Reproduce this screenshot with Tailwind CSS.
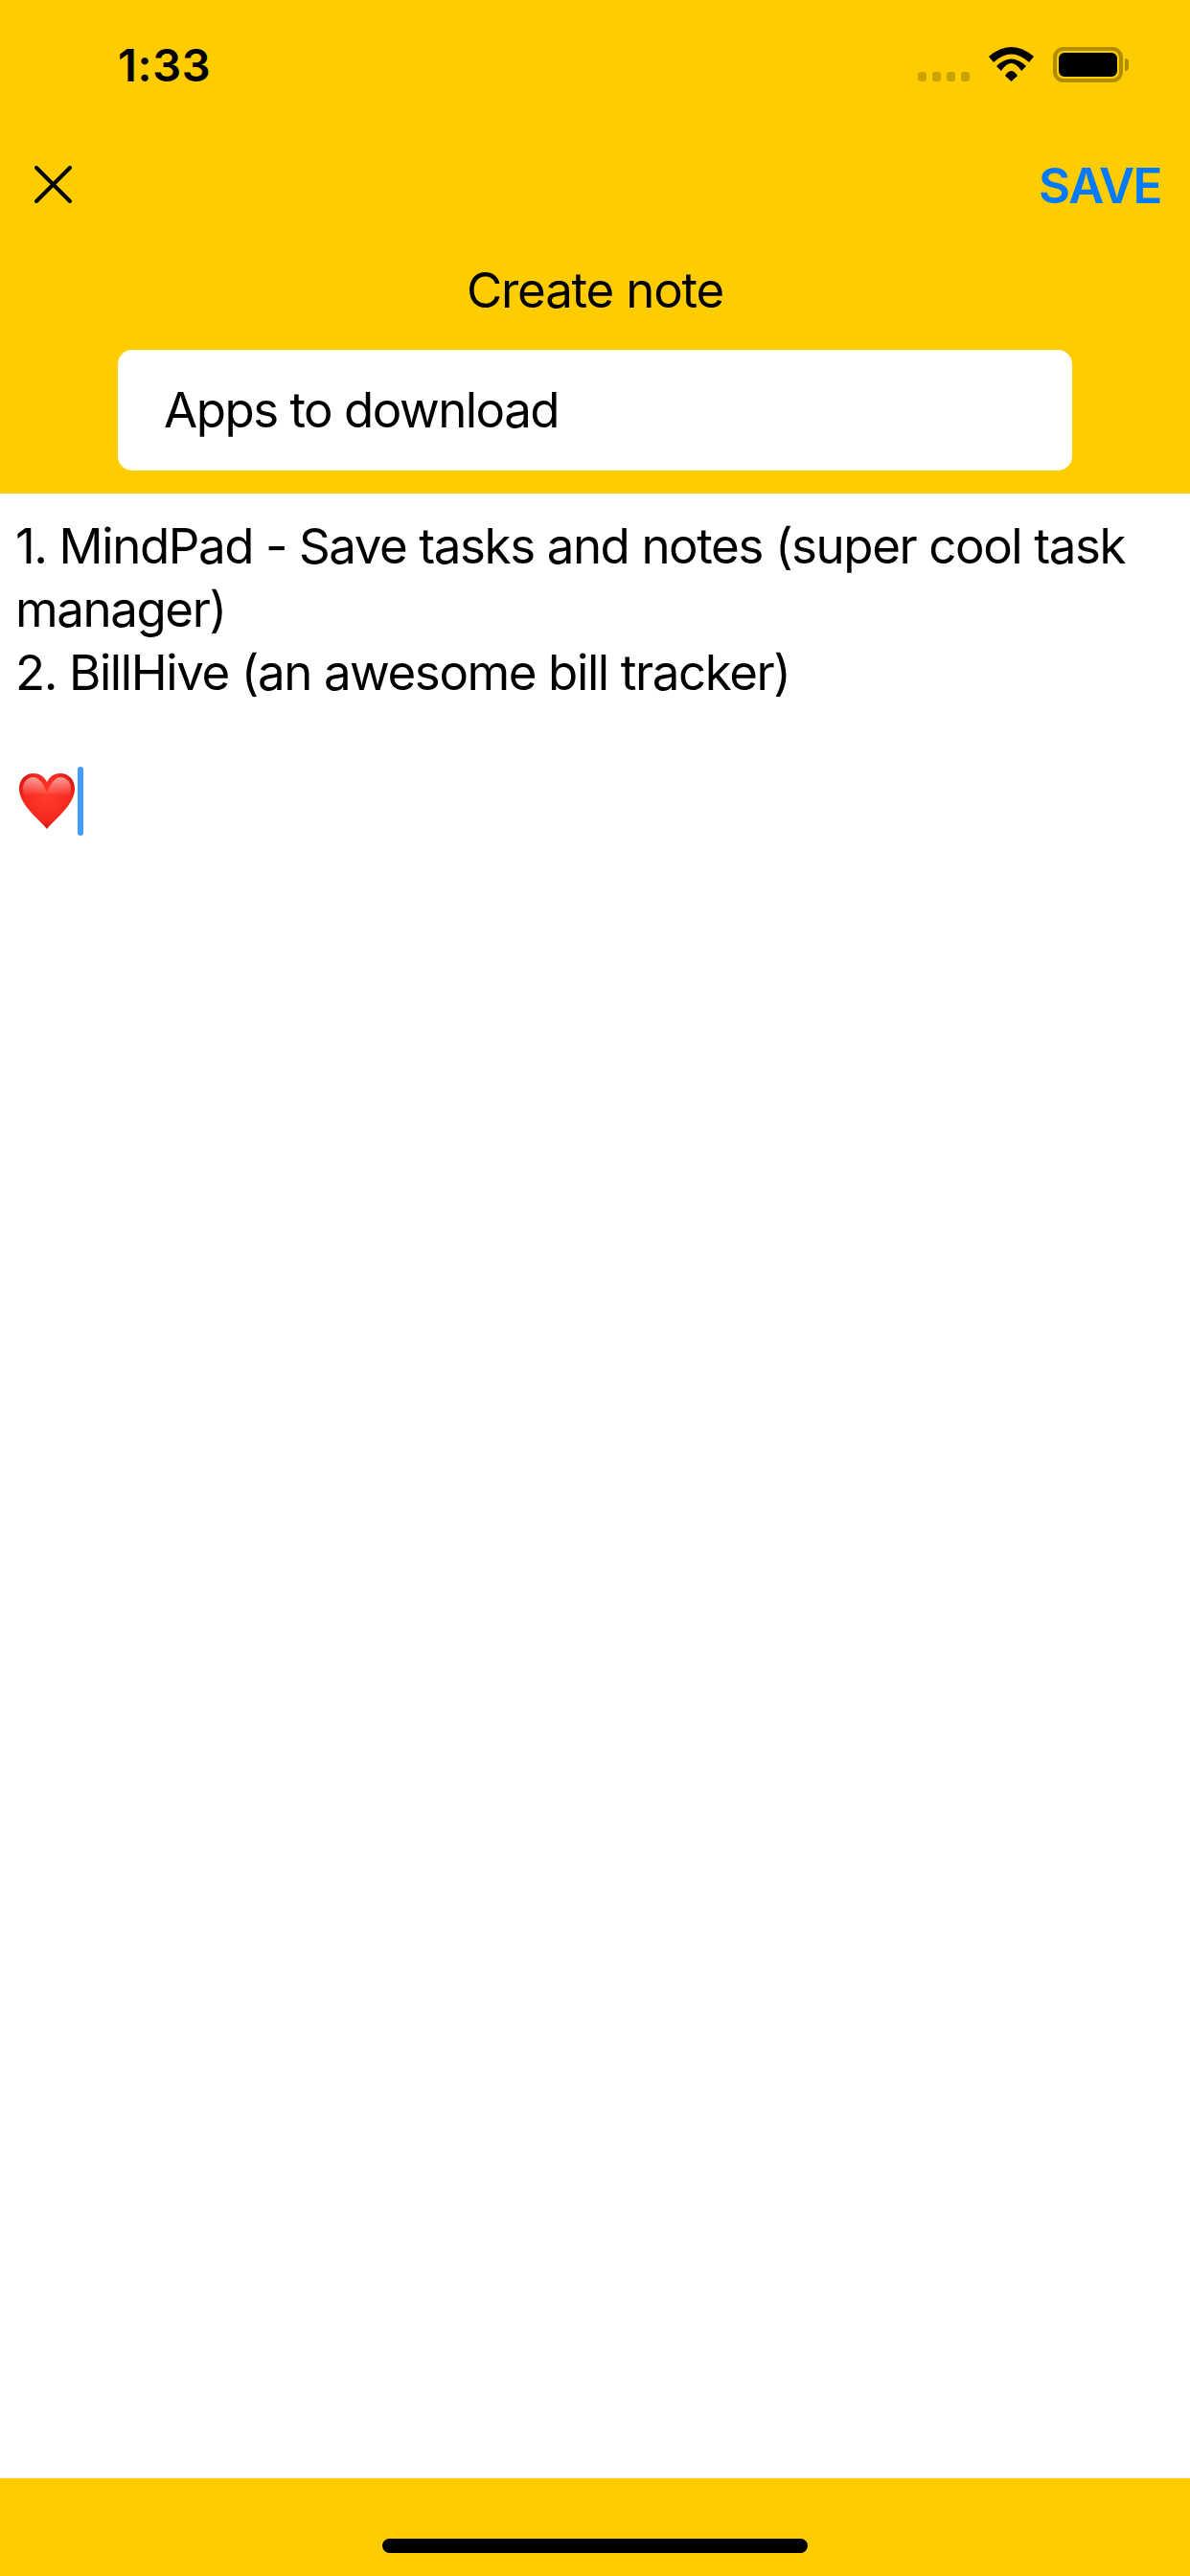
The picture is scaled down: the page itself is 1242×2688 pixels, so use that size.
<!DOCTYPE html>
<html lang="en">
<head>
<meta charset="utf-8">
<title>Create note</title>
<script src="https://cdn.jsdelivr.net/npm/@tailwindcss/browser@4"></script>
</head>
<body class="m-0 bg-white font-['Inter','Liberation_Sans',sans-serif] text-black">
<div class="flex h-[2688px] w-[1242px] flex-col overflow-hidden">
  <header class="flex h-[515px] flex-col bg-[#ffcc00]">
    <div class="flex h-[136px] items-start justify-between pl-[123px] pr-[64px] pt-[39px]">
      <span class="text-[47px] leading-[57px] font-semibold tracking-[0.7px]">1:33</span>
      <div class="flex items-start pt-[10px]">
        <div class="mt-[26px] flex gap-[6px]">
          <span class="h-[10px] w-[9px] rounded-[3px] bg-[#cca300]"></span>
          <span class="h-[10px] w-[9px] rounded-[3px] bg-[#cca300]"></span>
          <span class="h-[10px] w-[9px] rounded-[3px] bg-[#cca300]"></span>
          <span class="h-[10px] w-[9px] rounded-[3px] bg-[#cca300]"></span>
        </div>
        <svg class="ml-[20px] h-[36px] w-[47px]" viewBox="0 0 47 36" fill="#000">
          <path d="M0 10Q23.5 -10 47 10L42 16Q23.5 -1 5 16Z"/>
          <path d="M8 20Q23.5 5 39 20L34 25Q23.5 9 13 25Z"/>
          <path d="M17 30Q23.5 20 30 30L23.5 36Z"/>
        </svg>
        <div class="ml-[20px] flex items-center">
          <div class="flex h-[37px] w-[73px] items-center justify-center rounded-[11px] border-[4px] border-[#b08d00]">
            <div class="h-[25px] w-[61px] rounded-[6px] bg-black"></div>
          </div>
          <div class="ml-[2px] h-[13px] w-[4px] rounded-r-[4px] bg-[#b08d00]"></div>
        </div>
      </div>
    </div>
    <div class="flex h-[112px] items-center justify-between pl-[36px] pr-[30px]">
      <svg class="h-[39px] w-[39px]" viewBox="0 0 39 39" fill="none" stroke="#000" stroke-width="4" stroke-linecap="round">
        <path d="M2 2L37 37M37 2L2 37"/>
      </svg>
      <span class="mt-[3px] text-[51px] leading-[58px] font-semibold tracking-[-1.5px] text-[#007aff]">SAVE</span>
    </div>
    <div class="flex h-[117px] items-start justify-center pt-[26px]">
      <span class="text-[51px] leading-[58px] tracking-[-1.2px]">Create note</span>
    </div>
    <div class="mx-[123px] flex h-[126px] items-center rounded-[15px] bg-white pl-[48px] text-[51px] tracking-[-1.5px]">Apps to download</div>
  </header>
  <main class="flex-1 px-[16px] pt-[22px] text-[51px] leading-[66px] tracking-[-1.4px]">
    <div>1. MindPad - Save tasks and notes (super cool task<br>manager)<br>2. BillHive (an awesome bill tracker)</div>
    <div class="mt-[65px] flex items-center pl-[4px]">
      <svg class="h-[58px] w-[58px]" viewBox="0 0 58 58">
        <defs>
          <radialGradient id="heartFill" cx="50%" cy="42%" r="62%">
            <stop offset="0" stop-color="#ff3b2c"/>
            <stop offset="0.7" stop-color="#f5281e"/>
            <stop offset="1" stop-color="#b90d06"/>
          </radialGradient>
          <linearGradient id="heartGloss" x1="0" y1="0" x2="0" y2="1">
            <stop offset="0" stop-color="#ffffff" stop-opacity="0.55"/>
            <stop offset="1" stop-color="#ffffff" stop-opacity="0"/>
          </linearGradient>
        </defs>
        <path fill="url(#heartFill)" d="M29 58C22 49 0 33 0 16C0 6 7 0 15 0C21 0 26 3 29 9C32 3 37 0 43 0C51 0 58 6 58 16C58 33 36 49 29 58Z"/>
        <path fill="url(#heartGloss)" d="M29 20C26 12 21 4 15 4C8 4 4 10 4 16C4 19 5 22 6 24C15 20 43 20 52 24C53 22 54 19 54 16C54 10 50 4 43 4C37 4 32 12 29 20Z"/>
      </svg>
      <span class="ml-[3px] h-[72px] w-[6px] rounded-full bg-[#409cff]"></span>
    </div>
  </main>
  <footer class="flex h-[102px] items-start justify-center bg-[#ffcc00] pt-[63px]">
    <div class="h-[15px] w-[444px] rounded-full bg-black"></div>
  </footer>
</div>
</body>
</html>
